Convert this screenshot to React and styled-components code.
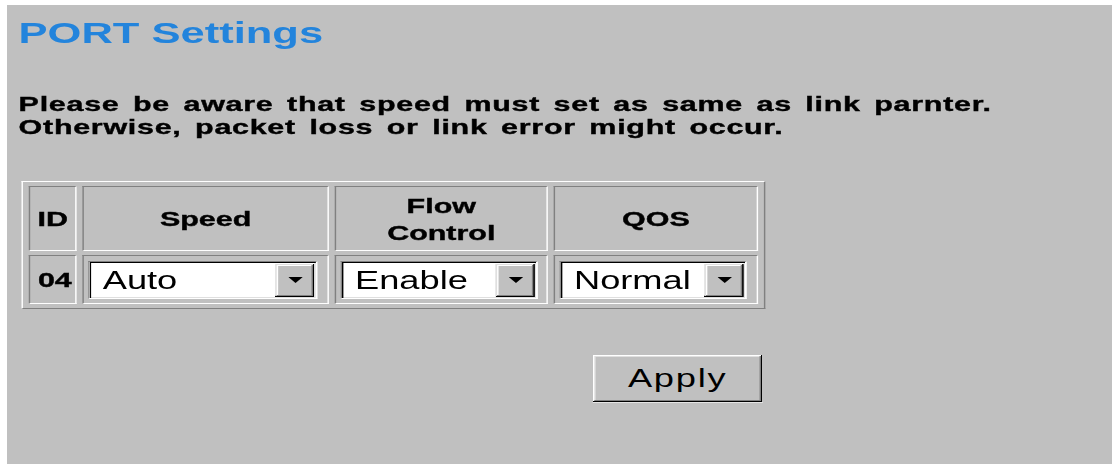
import React from "react";
import styled, { createGlobalStyle } from "styled-components";

// the shot is stretched sideways, so the whole page is drawn narrow and widened
const STRETCH = 1.45;

const GlobalStyle = createGlobalStyle`
  html, body {
    margin: 0;
    padding: 0;
    background: #ffffff;
    overflow: hidden;
  }
  * {
    box-sizing: border-box;
  }
`;

const Frame = styled.div`
  margin: 5px 0 0 7px;
  height: 459px;
  background-color: #c0c0c0;
  overflow: hidden;
  font-family: "Liberation Sans", Arial, sans-serif;
  color: #000;
`;

const Stage = styled.div`
  width: ${1105 / STRETCH}px;
  padding: 11px 0 0 8px;
  transform: scaleX(${STRETCH});
  transform-origin: 0 0;
`;

const Title = styled.h1`
  margin: 0;
  font-size: 30px;
  line-height: 34px;
  font-weight: bold;
  color: #2384dc;
`;

const Notice = styled.p`
  margin: 43px 0 0 0;
  font-size: 21px;
  line-height: 22.5px;
  font-weight: bold;
  letter-spacing: 0.5px;
  word-spacing: 3px;
  -webkit-text-stroke: 0.4px #000;
`;

const PortTable = styled.table`
  margin: 43px 0 0 2px;
  border-collapse: separate;
  border-spacing: 4px 4px;
  border: 1px solid;
  border-color: #ffffff #808080 #808080 #ffffff;
  table-layout: fixed;
`;

const HeadCell = styled.th`
  width: ${(p) => p.$w}px;
  height: 65px;
  padding: 0;
  border: 1px solid;
  border-color: #808080 #ffffff #ffffff #808080;
  font-size: 21px;
  line-height: 27px;
  font-weight: bold;
  text-align: center;
  vertical-align: middle;
  -webkit-text-stroke: 0.4px #000;
`;

const DataCell = styled.td`
  height: 49px;
  padding: 0 0 0 3px;
  border: 1px solid;
  border-color: #808080 #ffffff #ffffff #808080;
  font-size: 21px;
  font-weight: bold;
  vertical-align: middle;
  text-align: ${(p) => (p.$center ? "center" : "left")};
  -webkit-text-stroke: ${(p) => (p.$center ? "0.4px #000" : "0")};
`;

const Combo = styled.div`
  display: flex;
  width: ${(p) => p.$w}px;
  height: 38px;
  background-color: #ffffff;
  border: 1px solid;
  border-color: #808080 #ffffff #ffffff #808080;
  box-shadow: inset 1px 1px #000000, inset -1px -1px #dfdfdf;
  padding: 2px 1px 1px 2px;
`;

const ComboValue = styled.span`
  flex: 1;
  padding-left: 7px;
  font-size: 25px;
  font-weight: normal;
  line-height: 33px;
  white-space: nowrap;
  overflow: hidden;
`;

const ComboButton = styled.span`
  display: flex;
  align-items: center;
  justify-content: center;
  width: 27px;
  background-color: #c0c0c0;
  box-shadow: inset -1px -1px #000000, inset 1px 1px #dfdfdf,
    inset -2px -2px #808080, inset 2px 2px #ffffff;
`;

const ApplyRow = styled.div`
  display: flex;
  justify-content: flex-end;
  width: 515px;
  margin: 46px 0 0 2px;
  padding-right: 4px;
`;

const ApplyButton = styled.button`
  width: 117px;
  height: 47px;
  padding: 0;
  border: none;
  background-color: #c0c0c0;
  box-shadow: inset -1px -1px #000000, inset 1px 1px #ffffff,
    inset -2px -2px #808080, inset 2px 2px #dfdfdf;
  font-family: "Liberation Sans", Arial, sans-serif;
  font-size: 25px;
  letter-spacing: 1.2px;
  color: #000;
  cursor: pointer;
`;

function Arrow() {
  return (
    <svg width="10" height="7" viewBox="0 0 10 7">
      <polygon points="0,0 10,0 5,6" fill="#000" />
    </svg>
  );
}

function Dropdown(props) {
  return (
    <Combo $w={props.width}>
      <ComboValue>{props.value}</ComboValue>
      <ComboButton>
        <Arrow />
      </ComboButton>
    </Combo>
  );
}

export default function App() {
  return (
    <>
      <GlobalStyle />
      <Frame>
        <Stage>
          <Title>PORT Settings</Title>
          <Notice>
            Please be aware that speed must set as same as link parnter.
            <br />
            Otherwise, packet loss or link error might occur.
          </Notice>
          <PortTable>
            <thead>
              <tr>
                <HeadCell $w={33}>ID</HeadCell>
                <HeadCell $w={170}>Speed</HeadCell>
                <HeadCell $w={147}>
                  Flow
                  <br />
                  Control
                </HeadCell>
                <HeadCell $w={141}>QOS</HeadCell>
              </tr>
            </thead>
            <tbody>
              <tr>
                <DataCell $center>04</DataCell>
                <DataCell>
                  <Dropdown width={158} value="Auto" />
                </DataCell>
                <DataCell>
                  <Dropdown width={136} value="Enable" />
                </DataCell>
                <DataCell>
                  <Dropdown width={129} value="Normal" />
                </DataCell>
              </tr>
            </tbody>
          </PortTable>
          <ApplyRow>
            <ApplyButton>Apply</ApplyButton>
          </ApplyRow>
        </Stage>
      </Frame>
    </>
  );
}
